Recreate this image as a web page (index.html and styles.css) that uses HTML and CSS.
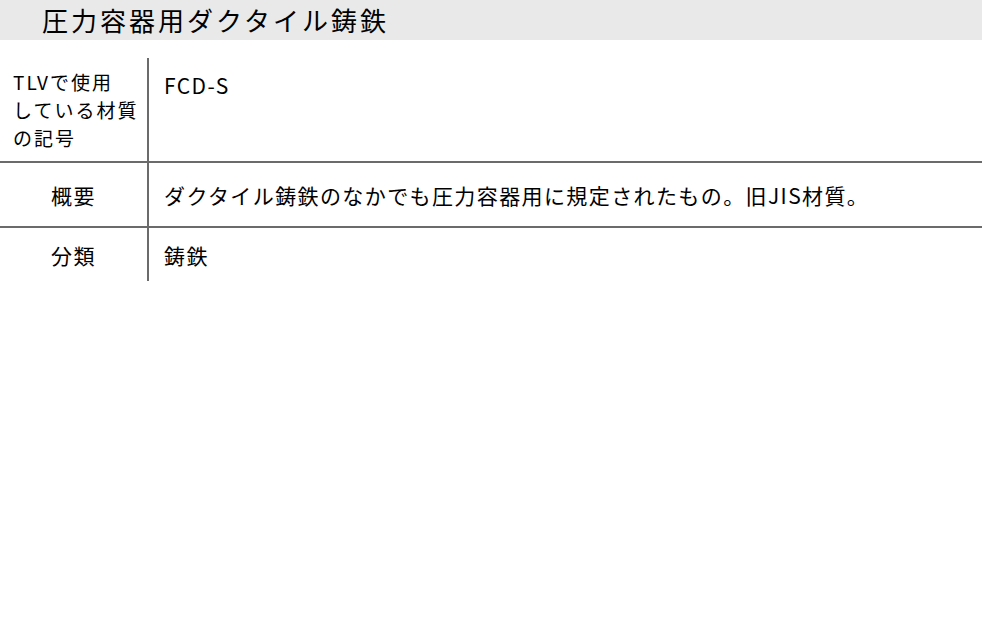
FILE: index.html
```html
<!DOCTYPE html>
<html lang="ja">
<head>
    <meta charset="UTF-8">
    <meta name="viewport" content="width=device-width, initial-scale=1.0">
    <title>圧力容器用ダクタイル鋳鉄</title>
    <link rel="stylesheet" href="styles.css">
</head>
<body>
    <h1 class="見出し">圧力容器用ダクタイル鋳鉄</h1>

    <table class="材質表">
        <tr class="行-記号">
            <th class="項目 項目-左">TLVで使用<br>している材質<br>の記号</th>
            <td class="内容 内容-上">FCD-S</td>
        </tr>
        <tr class="行-概要">
            <th class="項目">概要</th>
            <td class="内容">ダクタイル鋳鉄のなかでも圧力容器用に規定されたもの。旧JIS材質。</td>
        </tr>
        <tr class="行-分類">
            <th class="項目">分類</th>
            <td class="内容">鋳鉄</td>
        </tr>
    </table>
</body>
</html>
```

FILE: styles.css
```css
* {
    margin: 0;
    padding: 0;
    box-sizing: border-box;
}

body {
    background-color: #fff;
    font-family: "Noto Sans CJK JP", "Noto Sans", sans-serif;
    color: #000;
}

.見出し {
    height: 40px;
    line-height: 40px;
    padding-left: 42px;
    background: #e9e9e9;
    font-size: 26px;
    font-weight: normal;
    letter-spacing: 3px;
}

.材質表 {
    width: 100%;
    margin-top: 18px;
    border-collapse: collapse;
    font-size: 21px;
    line-height: 28px;
    letter-spacing: 1.4px;
}

.材質表 tr + tr {
    border-top: 2px solid #6b6b6b;
}

.項目 {
    width: 148px;
    border-right: 2px solid #6b6b6b;
    font-weight: normal;
    text-align: center;
    vertical-align: middle;
}

.項目-左 {
    padding-left: 13px;
    font-size: 19px;
    text-align: left;
    letter-spacing: 2px;
}

.内容 {
    padding-left: 15px;
    text-align: left;
    vertical-align: middle;
}

.内容-上 {
    padding-top: 13px;
    vertical-align: top;
}

.行-記号 {
    height: 104px;
}

.行-概要 {
    height: 65px;
}

.行-分類 {
    height: 54px;
}
```
